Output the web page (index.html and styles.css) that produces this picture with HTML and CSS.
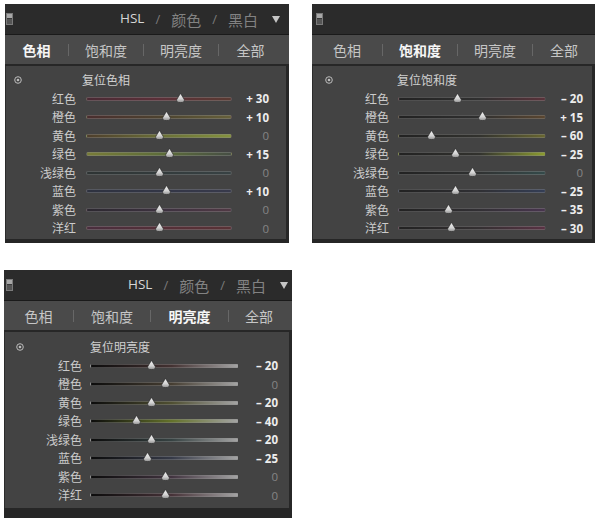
FILE: index.html
```html
<!DOCTYPE html>
<html lang="zh">
<head>
<meta charset="utf-8">
<title>HSL</title>
<link rel="stylesheet" href="styles.css">
</head>
<body>
<svg class="defs" width="0" height="0">
  <defs>
    <linearGradient id="thg" x1="0" y1="0" x2="0" y2="1">
      <stop offset="0" stop-color="#f4f4f4"/>
      <stop offset="0.6" stop-color="#d2d2d2"/>
      <stop offset="1" stop-color="#8e8e8e"/>
    </linearGradient>
    <symbol id="th" viewBox="0 0 9 10">
      <path d="M4.5 0.4 L8.2 6.4 Q9 9.6 4.5 9.6 Q0 9.6 0.8 6.4 Z" fill="url(#thg)" stroke="#262626" stroke-width="0.6"/>
    </symbol>
    <symbol id="rs" viewBox="0 0 8 8">
      <circle cx="4" cy="4" r="3.3" fill="none" stroke="#bdbdbd" stroke-width="1"/>
      <circle cx="4" cy="4" r="1.3" fill="#bdbdbd"/>
    </symbol>
    <symbol id="tg" viewBox="0 0 7 12">
      <rect x="0.5" y="0.5" width="6" height="11" fill="#3a3a3a" stroke="#7a7a7a"/>
      <rect x="1" y="1" width="5" height="4" fill="#a8a8a8"/>
      <rect x="1" y="6" width="5" height="5" fill="#555555"/>
    </symbol>
    <symbol id="dn" viewBox="0 0 8 7">
      <path d="M0 0 H8 L4 7 Z" fill="#c6c6c6"/>
    </symbol>
  </defs>
</svg>

<div class="page">
  <div class="row-top">
    <!-- Panel 1: 色相 -->
    <section class="panel p1">
      <header class="hdr">
        <svg class="toggle"><use href="#tg"/></svg>
        <div class="hdr-title">
          <span class="hsl">HSL</span><span class="slash">/</span><span class="dim">颜色</span><span class="slash">/</span><span class="dim">黑白</span><svg class="down"><use href="#dn"/></svg>
        </div>
      </header>
      <nav class="tabs">
        <span class="tab t1 active">色相</span><i class="sep"></i>
        <span class="tab t2">饱和度</span><i class="sep"></i>
        <span class="tab t3">明亮度</span><i class="sep"></i>
        <span class="tab t4">全部</span>
      </nav>
      <div class="body">
        <div class="reset"><svg class="ricon"><use href="#rs"/></svg><span>复位色相</span></div>
        <div class="srow"><span class="lab">红色</span><i></i><div class="trk h-red"><svg class="thumb" style="left:65%"><use href="#th"/></svg></div><span class="val">+ 30</span></div>
        <div class="srow"><span class="lab">橙色</span><i></i><div class="trk h-orange"><svg class="thumb" style="left:55%"><use href="#th"/></svg></div><span class="val">+ 10</span></div>
        <div class="srow"><span class="lab">黄色</span><i></i><div class="trk h-yellow"><svg class="thumb" style="left:50%"><use href="#th"/></svg></div><span class="val zero">0</span></div>
        <div class="srow"><span class="lab">绿色</span><i></i><div class="trk h-green"><svg class="thumb" style="left:57.5%"><use href="#th"/></svg></div><span class="val">+ 15</span></div>
        <div class="srow"><span class="lab">浅绿色</span><i></i><div class="trk h-aqua"><svg class="thumb" style="left:50%"><use href="#th"/></svg></div><span class="val zero">0</span></div>
        <div class="srow"><span class="lab">蓝色</span><i></i><div class="trk h-blue"><svg class="thumb" style="left:55%"><use href="#th"/></svg></div><span class="val">+ 10</span></div>
        <div class="srow"><span class="lab">紫色</span><i></i><div class="trk h-purple"><svg class="thumb" style="left:50%"><use href="#th"/></svg></div><span class="val zero">0</span></div>
        <div class="srow"><span class="lab">洋红</span><i></i><div class="trk h-magenta"><svg class="thumb" style="left:50%"><use href="#th"/></svg></div><span class="val zero">0</span></div>
      </div>
      <div class="foot"></div>
    </section>

    <!-- Panel 2: 饱和度 -->
    <section class="panel p2">
      <header class="hdr">
        <svg class="toggle"><use href="#tg"/></svg>
      </header>
      <nav class="tabs">
        <span class="tab t1">色相</span><i class="sep"></i>
        <span class="tab t2 active">饱和度</span><i class="sep"></i>
        <span class="tab t3">明亮度</span><i class="sep"></i>
        <span class="tab t4">全部</span>
      </nav>
      <div class="body">
        <div class="reset"><svg class="ricon"><use href="#rs"/></svg><span>复位饱和度</span></div>
        <div class="srow"><span class="lab">红色</span><i></i><div class="trk s-red"><svg class="thumb" style="left:40%"><use href="#th"/></svg></div><span class="val">– 20</span></div>
        <div class="srow"><span class="lab">橙色</span><i></i><div class="trk s-orange"><svg class="thumb" style="left:57.5%"><use href="#th"/></svg></div><span class="val">+ 15</span></div>
        <div class="srow"><span class="lab">黄色</span><i></i><div class="trk s-yellow"><svg class="thumb" style="left:22%"><use href="#th"/></svg></div><span class="val">– 60</span></div>
        <div class="srow"><span class="lab">绿色</span><i></i><div class="trk s-green"><svg class="thumb" style="left:38.5%"><use href="#th"/></svg></div><span class="val">– 25</span></div>
        <div class="srow"><span class="lab">浅绿色</span><i></i><div class="trk s-aqua"><svg class="thumb" style="left:50%"><use href="#th"/></svg></div><span class="val zero">0</span></div>
        <div class="srow"><span class="lab">蓝色</span><i></i><div class="trk s-blue"><svg class="thumb" style="left:38.5%"><use href="#th"/></svg></div><span class="val">– 25</span></div>
        <div class="srow"><span class="lab">紫色</span><i></i><div class="trk s-purple"><svg class="thumb" style="left:34%"><use href="#th"/></svg></div><span class="val">– 35</span></div>
        <div class="srow"><span class="lab">洋红</span><i></i><div class="trk s-magenta"><svg class="thumb" style="left:36%"><use href="#th"/></svg></div><span class="val">– 30</span></div>
      </div>
      <div class="foot"></div>
    </section>
  </div>

  <div class="row-bottom">
    <!-- Panel 3: 明亮度 -->
    <section class="panel p3">
      <header class="hdr">
        <svg class="toggle"><use href="#tg"/></svg>
        <div class="hdr-title">
          <span class="hsl">HSL</span><span class="slash">/</span><span class="dim">颜色</span><span class="slash">/</span><span class="dim">黑白</span><svg class="down"><use href="#dn"/></svg>
        </div>
      </header>
      <nav class="tabs">
        <span class="tab t1">色相</span><i class="sep"></i>
        <span class="tab t2">饱和度</span><i class="sep"></i>
        <span class="tab t3 active">明亮度</span><i class="sep"></i>
        <span class="tab t4">全部</span>
      </nav>
      <div class="body">
        <div class="reset"><svg class="ricon"><use href="#rs"/></svg><span>复位明亮度</span></div>
        <div class="srow"><span class="lab">红色</span><i></i><div class="trk l-red"><svg class="thumb" style="left:41%"><use href="#th"/></svg></div><span class="val">– 20</span></div>
        <div class="srow"><span class="lab">橙色</span><i></i><div class="trk l-orange"><svg class="thumb" style="left:51%"><use href="#th"/></svg></div><span class="val zero">0</span></div>
        <div class="srow"><span class="lab">黄色</span><i></i><div class="trk l-yellow"><svg class="thumb" style="left:41%"><use href="#th"/></svg></div><span class="val">– 20</span></div>
        <div class="srow"><span class="lab">绿色</span><i></i><div class="trk l-green"><svg class="thumb" style="left:31%"><use href="#th"/></svg></div><span class="val">– 40</span></div>
        <div class="srow"><span class="lab">浅绿色</span><i></i><div class="trk l-aqua"><svg class="thumb" style="left:41%"><use href="#th"/></svg></div><span class="val">– 20</span></div>
        <div class="srow"><span class="lab">蓝色</span><i></i><div class="trk l-blue"><svg class="thumb" style="left:38.5%"><use href="#th"/></svg></div><span class="val">– 25</span></div>
        <div class="srow"><span class="lab">紫色</span><i></i><div class="trk l-purple"><svg class="thumb" style="left:51%"><use href="#th"/></svg></div><span class="val zero">0</span></div>
        <div class="srow"><span class="lab">洋红</span><i></i><div class="trk l-magenta"><svg class="thumb" style="left:51%"><use href="#th"/></svg></div><span class="val zero">0</span></div>
      </div>
      <div class="foot"></div>
    </section>
  </div>
</div>
</body>
</html>
```

FILE: styles.css
```css
* { box-sizing: border-box; }

html, body {
  margin: 0;
  padding: 0;
  background: #ffffff;
}

body {
  width: 600px;
  height: 526px;
  overflow: hidden;
  font-family: "Noto Sans CJK SC", "Noto Sans", sans-serif;
}

.defs {
  position: absolute;
  width: 0;
  height: 0;
}

.page {
  padding: 4px 0 0 5px;
}

.row-top {
  display: flex;
  gap: 23px;
}

.row-bottom {
  margin-top: 27.5px;
  margin-left: -1px;
}

/* ---------- panel ---------- */
.panel {
  background: #262626;
  display: flex;
  flex-direction: column;
}

.p1 { width: 284px; }
.p2 { width: 283px; }
.p3 { width: 288px; }

.hdr {
  height: 31px;
  background: #2b2b2b;
  border-bottom: 1px solid #1a1a1a;
  display: flex;
  align-items: center;
  padding: 0 9px 0 1px;
}

.p2 .hdr { padding-left: 4px; }
.p3 .hdr { padding: 0 4px 0 2px; }

.toggle {
  width: 7px;
  height: 12px;
  flex: none;
}

.hdr-title {
  margin-left: auto;
  display: flex;
  align-items: center;
  line-height: 1;
}

.hsl {
  font-family: "Open Sans", "Liberation Sans", sans-serif;
  font-size: 13.5px;
  color: #d6d6d6;
}

.slash {
  font-family: "Open Sans", "Liberation Sans", sans-serif;
  font-size: 13px;
  color: #7a7a7a;
  margin: 0 11px;
}

.dim {
  font-size: 15px;
  color: #828282;
}

.down {
  width: 8px;
  height: 7px;
  margin-left: 14px;
}

/* ---------- tabs ---------- */
.tabs {
  height: 31px;
  background: #4a4a4a;
  border-bottom: 2px solid #272727;
  display: flex;
  align-items: center;
}

.tab {
  text-align: center;
  font-size: 14px;
  line-height: 1;
  color: #c6c6c6;
  flex: none;
}

.tab.active {
  color: #f6f6f6;
  font-weight: 700;
}

.tab.t4 { flex: 1; }

.sep {
  width: 1px;
  height: 12px;
  background: #676767;
  flex: none;
}

.p1 .t1 { width: 63px; }
.p1 .t2, .p1 .t3 { width: 74px; }
.p1 .t4 { padding-right: 7px; }

.p2 .t1 { width: 70px; }
.p2 .t2, .p2 .t3 { width: 74px; }

.p3 .t1 { width: 69px; }
.p3 .t2 { width: 76px; }
.p3 .t3 { width: 77px; }
.p3 .t4 { padding-right: 3px; }

/* ---------- body ---------- */
.body {
  background: #434343;
  padding: 5px 0 1px;
  box-shadow: inset 1px 0 #2c2c2c, inset -3px 0 #272727;
}

.p3 .body { padding: 6px 0 3.5px; }

.foot { height: 4px; background: #262626; }
.p3 .foot { height: 10px; }

.p1 { --lab: 71px; --g: 10px; --trk: 146px; --val: 37px; --ri: 9px; --rt: 60px; }
.p2 { --lab: 77px; --g: 9px; --trk: 148px; --val: 37px; --ri: 13px; --rt: 64px; }
.p3 { --lab: 78px; --g: 8px; --trk: 149px; --val: 39px; --ri: 12px; --rt: 66px; }

.reset {
  height: 18.5px;
  display: flex;
  align-items: center;
  padding-left: var(--ri);
}

.ricon {
  width: 8px;
  height: 8px;
  flex: none;
}

.reset span {
  margin-left: var(--rt);
  font-size: 12px;
  line-height: 1;
  color: #d0d0d0;
}

.srow {
  height: 18.5px;
  display: grid;
  grid-template-columns: var(--lab) var(--g) var(--trk) var(--val);
  align-items: center;
}

.lab {
  text-align: right;
  font-size: 12px;
  line-height: 1;
  color: #cbcbcb;
}

.val {
  text-align: right;
  font-family: "Open Sans", "Liberation Sans", sans-serif;
  font-weight: 700;
  font-size: 11.5px;
  line-height: 1;
  color: #ededed;
}

.val.zero {
  font-weight: 400;
  color: #858585;
}

.trk {
  position: relative;
  height: 4px;
  border-radius: 2px;
  border: 1px solid rgba(140, 140, 140, 0.42);
  background: #2a2a2a;
}

.thumb {
  position: absolute;
  top: -5px;
  width: 9px;
  height: 10px;
  margin-left: -4.5px;
}

/* hue tracks */
.h-red     { background: linear-gradient(90deg, #4a2a34, #5c3039 50%, #5a3a32); }
.h-orange  { background: linear-gradient(90deg, #4a2e2e, #4e4530 55%, #66603a); }
.h-yellow  { background: linear-gradient(90deg, #4e3e2c, #6c7238 55%, #84923e); }
.h-green   { background: linear-gradient(90deg, #787c38, #5c6c3a 55%, #464e44); }
.h-aqua    { background: linear-gradient(90deg, #2e3434, #384244); }
.h-blue    { background: linear-gradient(90deg, #2e3240, #383a4c); }
.h-purple  { background: linear-gradient(90deg, #2c2830, #3e3240 55%, #503844); }
.h-magenta { background: linear-gradient(90deg, #4a2e3e, #563038 55%, #5a3236); }

/* saturation tracks */
.s-red     { background: linear-gradient(90deg, #222222, #303030 55%, #5a323a); }
.s-orange  { background: linear-gradient(90deg, #222222, #303030 55%, #5a4630); }
.s-yellow  { background: linear-gradient(90deg, #222222, #32322e 55%, #686630); }
.s-green   { background: linear-gradient(90deg, #222222, #32322e 55%, #8c9c30); }
.s-aqua    { background: linear-gradient(90deg, #222222, #303232 55%, #344a4a); }
.s-blue    { background: linear-gradient(90deg, #222222, #303034 55%, #343e56); }
.s-purple  { background: linear-gradient(90deg, #222222, #323034 55%, #48344e); }
.s-magenta { background: linear-gradient(90deg, #222222, #343032 55%, #5a3244); }

/* luminance tracks */
.l-red     { background: linear-gradient(90deg, #0c0c0c, #443232 55%, #a4a4a4); }
.l-orange  { background: linear-gradient(90deg, #0c0c0c, #463e32 55%, #a4a4a4); }
.l-yellow  { background: linear-gradient(90deg, #0c0c0c, #505032 55%, #a4a4a4); }
.l-green   { background: linear-gradient(90deg, #0c0c0c, #64722a 55%, #a4a4a4); }
.l-aqua    { background: linear-gradient(90deg, #0c0c0c, #364242 55%, #a4a4a4); }
.l-blue    { background: linear-gradient(90deg, #0c0c0c, #363a48 55%, #a4a4a4); }
.l-purple  { background: linear-gradient(90deg, #0c0c0c, #423440 55%, #a4a4a4); }
.l-magenta { background: linear-gradient(90deg, #0c0c0c, #463238 55%, #a4a4a4); }
```
